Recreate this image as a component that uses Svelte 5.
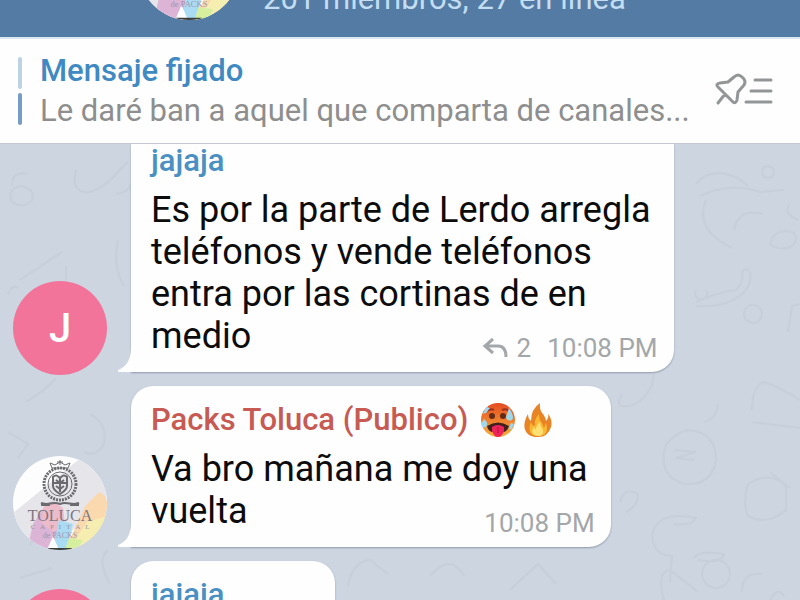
<script lang="ts">
  type Message = {
    name: string;
    color: string;
    avatar: string;
    text: string;
    time?: string;
    replies?: number;
    hot?: boolean;
    continued?: boolean;
  };

  const messages: Message[] = [
    {
      name: 'jajaja',
      color: 'blue',
      avatar: 'J',
      text: 'Es por la parte de Lerdo arregla\nteléfonos y vende teléfonos\nentra por las cortinas de en\nmedio',
      time: '10:08 PM',
      replies: 2,
      continued: true
    },
    {
      name: 'Packs Toluca (Publico)',
      color: 'red',
      avatar: '',
      text: 'Va bro mañana me doy una\nvuelta',
      time: '10:08 PM',
      hot: true
    },
    { name: 'jajaja', color: 'blue', avatar: 'J', text: '' }
  ];
</script>

{#snippet groupLogo()}
  <svg class="logo" viewBox="0 0 94 94" aria-hidden="true">
    <rect width="94" height="94" fill="#fdfdfd" />
    <path d="M0 57 54 13 70 0h24v40L58 76 36 94H0z" fill="#e6e5e9" />
    <path d="M86 36q8 4 8 10v32L66 94H52l20-44z" fill="#fbd9ae" />
    <path d="M74 66 94 60v34H54l12-16z" fill="#f6eeb0" />
    <path d="M32 50c4-6 12-6 14 0l6 18-14 26H14l6-26z" fill="#dbb4d6" />
    <path d="M30 52q4-6 14-4l6 4 2 16-12 8-12-10z" fill="#edbccb" />
    <path d="M46 64 60 68 54 94H40z" fill="#a9dcf3" />
    <path d="M56 82 70 84 64 94H52z" fill="#d5ef9f" />
    <path d="M40 80 46 94H34z" fill="#fff" />
    <path d="M35 92h24v2H35z" fill="#3c3f3c" />
    <g fill="none" stroke="#6a6a6f">
      <circle cx="47" cy="28" r="16" stroke-width="3" stroke-dasharray="2 1" />
      <circle cx="47" cy="28" r="12" stroke-width="1" />
      <path d="M40 21c3-3 5-1 7 1 2-2 4-4 7-1v9c0 4-4 6-7 8-3-2-7-4-7-8z" stroke-width="2" />
      <path d="M43 24l4 3 4-3M43 30l4 3 4-3M47 22v14M41 27h12" stroke-width="2" />
      <path d="M39 12l-2-5 5 2 5-3 5 3 5-2-2 5zM47 4v5M44 6h6" stroke-width="1" />
      <path d="M28 47c7 3 12-2 19 1 7-3 12 2 19-1M28 49h9M57 49h9" stroke-width="2" />
    </g>
    <text x="47" y="65" text-anchor="middle" font-size="16" fill="#7d7682">TOLUCA</text>
    <text x="47" y="73" text-anchor="middle" font-size="7" fill="#9992a0" xml:space="preserve">C   A   P   I   T   A   L</text>
    <text x="47" y="82" text-anchor="middle" font-size="8" fill="#a195a8">de PACKS</text>
  </svg>
{/snippet}

<div class="app">
  <header class="topbar">
    <div class="top-avatar">{@render groupLogo()}</div>
    <p class="status">201 miembros, 27 en línea</p>
  </header>

  <section class="pinned">
    <div class="steps"><i></i><i class="active"></i></div>
    <div class="pinned-body">
      <h2>Mensaje fijado</h2>
      <p>Le daré ban a aquel que comparta de canales...</p>
    </div>
    <button class="pin-list" aria-label="Mensajes fijados">
      <svg viewBox="0 0 58 34" fill="none" stroke="#929697" stroke-width="3" stroke-linecap="round" stroke-linejoin="round">
        <path d="M2 29 9 20M2 13 17 28Q20 30 21 26L22 18 28 11Q30 8 28 5L26 3Q22-1 18 3L12 8 4 9Q-1 10 2 13z" />
        <path d="M39 6h16M35 17h20M30 28h25" />
      </svg>
    </button>
  </section>

  <main class="chat">
    <svg class="doodles" viewBox="0 0 800 456" preserveAspectRatio="xMidYMid slice" aria-hidden="true">
      <path d="M12 42q0-16 16-12M12 58q-6-14 10-16 14 4 10 14-8 10-20 2M76 26q-6 24 14 22 14-4 26-18l12-12M116 50q14-2 14-10M20 136l42-28M66 122v16M118 96q-6 26 6 46M8 150q4-10 10-6" />
      <path d="M26 258q20-12 30-24M8 288l20 12-10 14M90 270q18 10 14 30-8 14-20 8M28 380q8 10 2 22M20 434l32-10M110 440q-14-24-2-34" />
      <path d="M696 40q14-18 42-6l10 8M700 52q30-14 60-4l24-2M706 56q-12 30 26 48M734 86q4-22 28-16M770 100q4-16 22-12 10 8-4 16-12 2-18-4M762 28a6 6 0 1 0 12 0a6 6 0 1 0-12 0M790 60q-8 8 8 16" />
      <path d="M696 158q22-10 40-12 8-8 6-18 4-6 8 0 2 14-8 22-16 14-46 12M744 170a9 9 0 1 0 18 0a9 9 0 1 0-18 0M696 146a6 6 0 1 0 10 0M788 188l4-26 8-2" />
      <path d="M622 250q-8 14 4 12 14 0 26-20l2-12M752 266q0-24 12-28 14 4 36 18M752 278l48 6M664 320q-4-26 24-34 28 2 28 30-4 26-32 24-18-6-20-20M674 306l22 2-20 6 18 2M704 278q12-2 14-18M620 358q4-16 18-8 0 12-12 18" />
      <path d="M748 340q22-14 38 2v24q-18 16-38 6-6-14 0-32M770 328l20 16M652 392q4-26 44-18-4 8-22 6M652 392q2 20 20 20l-2 26M694 414q4-8 30-4-2 10-26 6M702 430a14 14 0 1 0 28 0a14 14 0 1 0-28 0M664 456q-8-28 6-30l28 22M742 448q0-20 20-18M770 456q8-14 14-4" />
      <path d="M348 442q4-24 22-26l18 14M430 432q20-24 34 0M510 446l28-26 18 20" />
    </svg>

    {#each messages as msg}
      <article class="message">
        <div class="avatar" class:letter={msg.avatar}>
          {#if msg.avatar}{msg.avatar}{:else}{@render groupLogo()}{/if}
        </div>
        <div class="bubble" class:continued={msg.continued}>
          <svg class="tail" viewBox="0 0 16 24" aria-hidden="true">
            <path d="M14 0C14 12 9 19 1 22Q0 23 2 24H16V0z" fill="#fff" />
          </svg>
          <h3 class="name {msg.color}">
            <span>{msg.name}</span>
            {#if msg.hot}
              <svg class="emoji" viewBox="0 0 36 36" role="img" aria-label="Cara con calor">
                <defs>
                  <linearGradient id="heat" x2="0" y2="1">
                    <stop offset="0" stop-color="#e44b22" />
                    <stop offset="1" stop-color="#f8b13c" />
                  </linearGradient>
                </defs>
                <circle cx="18" cy="18" r="17" fill="url(#heat)" />
                <path d="M7 9q4-3 7-1M22 8q4-2 7 1" fill="none" stroke="#9b2f1a" stroke-width="2" />
                <circle cx="12" cy="14" r="3" fill="#652b17" />
                <circle cx="23" cy="14" r="3" fill="#652b17" />
                <path d="M7 24q11-7 22 0-2 6-6 6H12q-4-1-5-6z" fill="#40201d" />
                <path d="M12 25q6-4 12 0v4q-2 6-6 6t-6-6z" fill="#ed2459" />
                <path d="M18 25v6" stroke="#b80c41" stroke-width="1" />
                <path d="M29 6q6 9 3 12-5 2-6-3zM4 17q5 4 2 8-4 2-5-3zM6 5l4 1-4 5-3 1zM31 21l3 1-3 6-2-2z" fill="#9ed9ed" />
              </svg>
              <svg class="emoji" viewBox="0 0 36 36" role="img" aria-label="Fuego">
                <path d="M18 35C6 35 3 27 5 19q1-4 3-7 0 5 3 7 0-12 9-18-1 7 3 11 3 4 3 7 3-3 2-7 5 6 3 13-3 10-13 10z" fill="#e98426" />
                <path d="M18 34C9 34 8 26 11 20q1 4 4 4-1-7 4-12 0 6 3 9l2 5 2-5q4 13-8 13z" fill="#f9b733" />
                <path d="M18 34c-8-1-6-6-4-9l2 3q0-5 4-8 0 4 3 8 1 6-5 6z" fill="#ffe070" />
              </svg>
            {/if}
          </h3>
          <p class="text">{msg.text}</p>
          {#if msg.time}
            <div class="meta">
              {#if msg.replies}
                <svg class="reply" viewBox="0 0 26 22" fill="none" stroke="#a3a7aa" stroke-width="3" aria-hidden="true">
                  <path d="M11 2 3 9l8 7M3 9h13q8 0 8 11" />
                </svg>
                <span class="replies">{msg.replies}</span>
              {/if}
              <time>{msg.time}</time>
            </div>
          {/if}
        </div>
      </article>
    {/each}
  </main>
</div>

<style>
  :global(body) { margin: 0; }
  .app {
    display: flex; flex-direction: column; height: 100vh; overflow: hidden;
    font-family: Roboto, "Liberation Sans", sans-serif; background: #cdd5e1;
  }
  h2, h3, p { margin: 0; }

  .topbar {
    display: flex; align-items: flex-end; gap: 24px; flex: none;
    height: 37px; padding-left: 139px; overflow: hidden; background: #537ba3;
  }
  .top-avatar { flex: none; width: 100px; height: 100px; margin-bottom: 17px; border-radius: 50%; overflow: hidden; }
  .status { margin-bottom: 20px; font-size: 31px; line-height: 36px; color: #c3def3; white-space: nowrap; }

  .pinned {
    display: flex; align-items: center; flex: none; box-sizing: border-box;
    height: 107px; padding: 0 26px 0 18px; background: #fefefe;
    border-top: 2px solid #dce7f0; border-bottom: 1px solid #c4c9d0;
  }
  .steps { display: flex; flex-direction: column; gap: 4px; }
  .steps i { width: 4px; height: 32px; border-radius: 2px; background: #bdd2e6; }
  .steps i.active { background: #759dc6; }
  .pinned-body { flex: 1; min-width: 0; margin-left: 18px; }
  .pinned-body h2 { font-size: 31px; line-height: 40px; font-weight: 500; color: #3f8ac2; }
  .pinned-body p { font-size: 31px; line-height: 40px; color: #8e8e8e; white-space: nowrap; overflow: hidden; text-overflow: ellipsis; }
  .pin-list { flex: none; padding: 0; border: 0; background: none; cursor: pointer; }
  .pin-list svg { display: block; width: 58px; height: 34px; overflow: visible; }

  .chat {
    position: relative; display: flex; flex-direction: column; gap: 14px;
    flex: 1; min-height: 0; overflow: hidden;
  }
  .doodles {
    position: absolute; inset: 0; width: 100%; height: 100%;
    fill: none; stroke: #c2cad7; stroke-width: 2; opacity: 0.5;
  }

  .message { display: flex; align-items: flex-end; gap: 24px; flex: none; padding-left: 13px; }
  .avatar {
    position: relative; flex: none; width: 94px; height: 94px;
    margin-bottom: -3px; border-radius: 50%; overflow: hidden;
  }
  .avatar.letter {
    display: flex; align-items: center; justify-content: center;
    background: #f2749a; color: #fff; font-size: 40px; font-weight: 500;
  }
  .logo { display: block; width: 100%; height: 100%; font-family: "Liberation Serif", serif; }

  .bubble {
    position: relative; box-sizing: border-box; min-width: 204px; min-height: 119px;
    padding: 17px 23px 15px 20px; border-radius: 22px 22px 22px 0;
    background: #fefefe; box-shadow: 0 1px 2px #8f9aa8;
  }
  .bubble.continued { padding-top: 0; border-top-left-radius: 0; border-top-right-radius: 0; }
  .tail { position: absolute; left: -14px; bottom: 0; width: 16px; height: 24px; }
  .name {
    display: flex; align-items: center; gap: 4px; margin-bottom: 11px;
    font-size: 31px; line-height: 34px; font-weight: 500;
  }
  .name span { margin-right: 8px; }
  .blue { color: #4a90c2; }
  .red { color: #c75a52; }
  .emoji { width: 36px; height: 36px; margin: -1px 0; }
  .text { font-size: 36px; line-height: 42px; color: #0c0c0c; white-space: pre-line; }
  .meta {
    position: absolute; right: 16px; bottom: 8px; display: flex; align-items: center;
    font-size: 26px; line-height: 32px; color: #a3a7aa;
  }
  .reply { width: 26px; height: 22px; margin-right: 9px; }
  .replies { margin-right: 16px; }
</style>
